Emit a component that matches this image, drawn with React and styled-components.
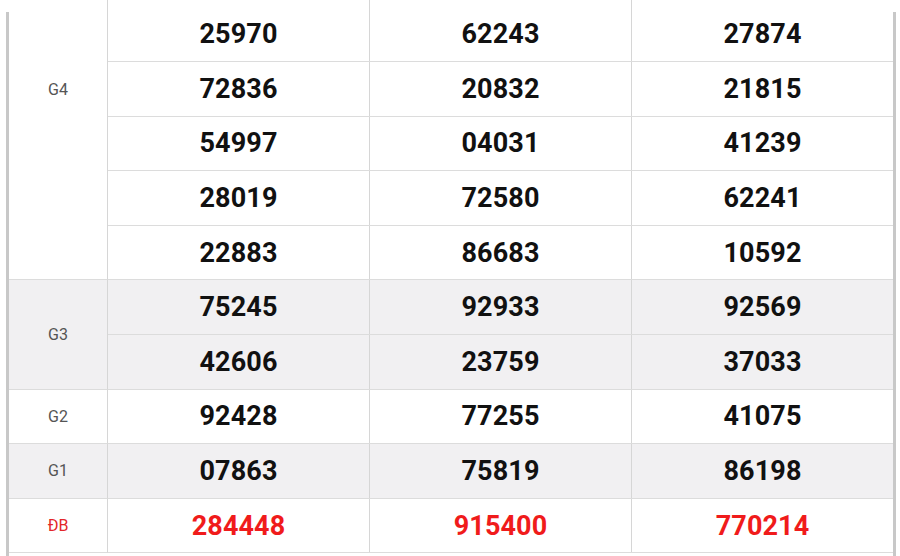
import React from 'react';
import styled, { createGlobalStyle } from 'styled-components';

const GlobalStyle = createGlobalStyle`
  html, body {
    margin: 0;
    padding: 0;
    background: #ffffff;
    font-family: Roboto, "Liberation Sans", Arial, sans-serif;
  }
`;

const Page = styled.div`
  width: 900px;
  height: 556px;
  overflow: hidden;
  background: #fff;
`;

// the grey side bars of the results card, they begin a little below the top
const Card = styled.div`
  display: flow-root;
  margin: 12px 4px 0 6px;
  height: 544px;
  border-left: 3px solid #c8c8c8;
  border-right: 3px solid #c8c8c8;
`;

const Table = styled.div`
  margin-top: -12px;
`;

const Group = styled.div`
  display: grid;
  grid-template-columns: 99px 1fr;
  background: ${p => (p.$shade ? '#f1f0f2' : '#ffffff')};
`;

const Label = styled.div`
  display: flex;
  align-items: center;
  justify-content: center;
  box-sizing: border-box;
  border-right: 1px solid #d6d6d6;
  border-bottom: 1px solid #dcdcdc;
  padding-bottom: ${p => p.$lift || 0}px;
  font-size: 16px;
  color: ${p => (p.$special ? '#e3262a' : '#555555')};
`;

const Rows = styled.div`
  display: flex;
  flex-direction: column;
`;

const Row = styled.div`
  display: grid;
  grid-template-columns: 262px 262px 261px;
  box-sizing: border-box;
  height: ${p => p.$h || 54.6}px;
  border-bottom: 1px solid #dcdcdc;
`;

const Cell = styled.div`
  display: flex;
  align-items: center;
  justify-content: center;
  box-sizing: border-box;
  padding-top: ${p => p.$pad || 0}px;
  &:not(:last-child) {
    border-right: 1px solid #d6d6d6;
  }
  font-size: 27px;
  font-weight: 700;
  letter-spacing: 0.1px;
  color: ${p => (p.$special ? '#f01b1b' : '#111111')};
`;

const prizes = [
  {
    name: 'G4',
    lift: 101,
    rows: [
      ['25970', '62243', '27874'],
      ['72836', '20832', '21815'],
      ['54997', '04031', '41239'],
      ['28019', '72580', '62241'],
      ['22883', '86683', '10592'],
    ],
  },
  {
    name: 'G3',
    shade: true,
    rows: [
      ['75245', '92933', '92569'],
      ['42606', '23759', '37033'],
    ],
  },
  { name: 'G2', rows: [['92428', '77255', '41075']] },
  { name: 'G1', shade: true, rows: [['07863', '75819', '86198']] },
  { name: 'ĐB', special: true, rows: [['284448', '915400', '770214']] },
];

const App = () => {
  return (
    <>
      <GlobalStyle />
      <Page>
        <Card>
          <Table>
            {prizes.map((prize, gi) => (
              <Group key={prize.name} $shade={prize.shade}>
                <Label $lift={prize.lift} $special={prize.special}>
                  {prize.name}
                </Label>
                <Rows>
                  {prize.rows.map((row, ri) => {
                    const top = gi === 0 && ri === 0;
                    return (
                      <Row key={ri} $h={top ? 62 : undefined}>
                        {row.map((num, ci) => (
                          <Cell key={ci} $pad={top ? 7 : 0} $special={prize.special}>
                            {num}
                          </Cell>
                        ))}
                      </Row>
                    );
                  })}
                </Rows>
              </Group>
            ))}
          </Table>
        </Card>
      </Page>
    </>
  );
};

export default App;
